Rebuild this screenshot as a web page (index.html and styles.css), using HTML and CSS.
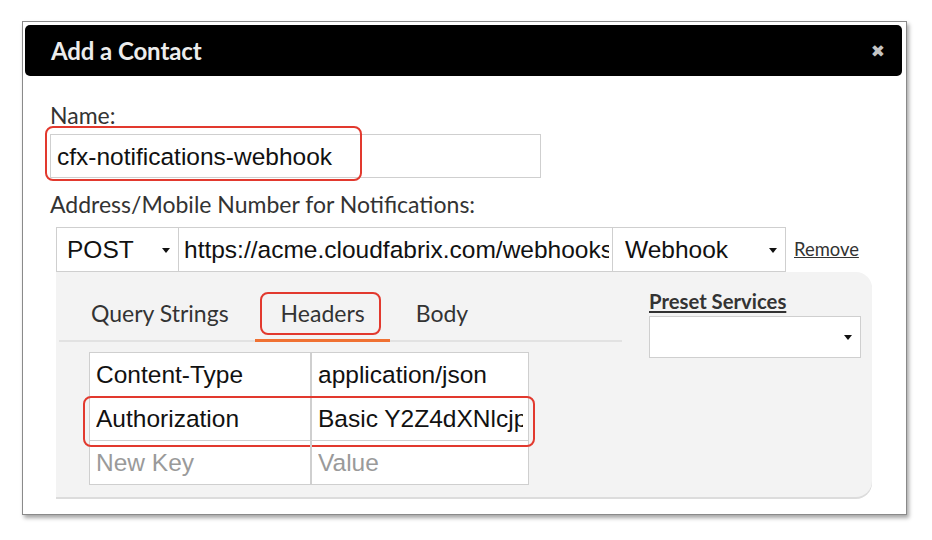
FILE: index.html
```html
<!DOCTYPE html>
<html>
<head>
<meta charset="utf-8">
<link rel="stylesheet" href="styles.css">
</head>
<body>
<div class="dialog">
  <div class="titlebar">
    <span class="title">Add a Contact</span>
    <span class="close">&#x2716;</span>
  </div>
  <div class="content">
    <div class="label name-label">Name:</div>
    <div class="name-wrap">
      <div class="input name-input">cfx-notifications-webhook</div>
      <span class="hl hl-name"></span>
    </div>
    <div class="label addr-label">Address/Mobile Number for Notifications:</div>
    <div class="addr-row">
      <div class="input select method">POST<span class="caret"></span></div>
      <div class="input url"><span class="clip">https://acme.cloudfabrix.com/webhooks</span></div>
      <div class="input select type">Webhook<span class="caret"></span></div>
      <a class="remove">Remove</a>
    </div>
    <div class="panel">
      <div class="panel-main">
        <div class="tabs">
          <div class="tab">Query Strings</div>
          <div class="tab active">Headers<span class="hl hl-tab"></span></div>
          <div class="tab">Body</div>
        </div>
        <div class="kv">
          <div class="kv-row">
            <div class="cell"><span class="clip">Content-Type</span></div>
            <div class="cell"><span class="clip">application/json</span></div>
          </div>
          <div class="kv-row">
            <div class="cell"><span class="clip">Authorization</span></div>
            <div class="cell"><span class="clip">Basic Y2Z4dXNlcjpwYXNz</span></div>
            <span class="hl hl-auth"></span>
          </div>
          <div class="kv-row">
            <div class="cell placeholder"><span class="clip">New Key</span></div>
            <div class="cell placeholder"><span class="clip">Value</span></div>
          </div>
        </div>
      </div>
      <div class="panel-side">
        <a class="preset-label">Preset Services</a>
        <div class="input select preset"><span class="caret"></span></div>
      </div>
    </div>
  </div>
</div>
</body>
</html>
```

FILE: styles.css
```css
* { box-sizing: border-box; }
html, body { margin: 0; padding: 0; background: #fff; }
body { width: 932px; height: 540px; overflow: hidden; }

.dialog {
  margin: 21px 0 0 22px;
  width: 885px;
  height: 494px;
  border: 1px solid #8a8a8a;
  background: #fff;
  padding: 3px 4px 0 2px;
  box-shadow: 2px 3px 4px rgba(0,0,0,0.35);
}

.titlebar {
  height: 51px;
  background: #000;
  border-radius: 5px;
  display: flex;
  align-items: center;
  justify-content: space-between;
  padding: 0 17px 0 26px;
}
.title {
  font-family: "Lato", sans-serif;
  font-weight: 700;
  font-size: 24px;
  color: #ececec;
  letter-spacing: -0.1px;
}
.close {
  font-family: "DejaVu Sans", sans-serif;
  font-size: 17px;
  color: #c4c4c4;
  font-weight: bold;
}

.content { padding-left: 25px; }

.label {
  font-family: "Lato", sans-serif;
  font-size: 23px;
  color: #333;
  line-height: 26px;
}
.name-label { margin-top: 26px; height: 32px; }
.addr-label { margin-top: 13px; margin-bottom: 10px; height: 26px; }

.input {
  font-family: "Liberation Sans", Arial, sans-serif;
  font-size: 24.5px;
  color: #111;
  background: #fff;
  border: 1px solid #cfcfcf;
  white-space: nowrap;
  overflow: hidden;
  display: flex;
  align-items: center;
}
.clip { display: block; flex: 1; min-width: 0; overflow: hidden; white-space: nowrap; }

.name-wrap { position: relative; width: 491px; height: 44px; }
.name-input { width: 491px; height: 44px; padding: 2px 0 0 6px; }

.hl {
  position: absolute;
  border: 2px solid #e2392e;
  border-radius: 8px;
  pointer-events: none;
}
.hl-name { left: -5px; top: -8px; width: 317px; height: 55px; }

.addr-row { display: flex; align-items: center; margin-left: 6px; height: 45px; }
.select { position: relative; }
.method { width: 123px; height: 45px; padding-left: 10px; }
.url { width: 434px; height: 45px; padding: 0 3px 0 5px; border-left: none; }
.type { width: 173px; height: 45px; padding-left: 12px; border-left: none; }
.caret {
  position: absolute;
  right: 8px;
  top: 50%;
  margin-top: -2px;
  width: 0; height: 0;
  border-left: 4px solid transparent;
  border-right: 4px solid transparent;
  border-top: 5px solid #111;
}
.remove {
  margin-left: 8px;
  font-family: "Lato", sans-serif;
  font-size: 18.4px;
  color: #333;
  text-decoration: underline;
  margin-top: -2px;
}

.panel {
  margin-left: 6px;
  width: 816px;
  height: 225px;
  background: #f3f3f3;
  border-radius: 0 16px 16px 0;
  box-shadow: 0 2px 0 #dcdcdc;
  display: flex;
}
.panel-main { width: 566px; padding-left: 3px; }

.tabs {
  margin-top: 16px;
  display: flex;
  padding-left: 6px;
  border-bottom: 2px solid #e2e2e2;
  height: 54px;
}
.tab {
  position: relative;
  font-family: "Lato", sans-serif;
  font-size: 23px;
  color: #333;
  line-height: 30px;
  padding: 10px 26px 12px;
  height: 54px;
}
.tab.active { border-bottom: 3px solid #f07132; padding-right: 25px; }
.hl-tab { left: 5px; top: 4px; width: 121px; height: 43px; }

.kv {
  margin: 10px 0 0 30px;
  width: 440px;
  border: 1px solid #cfcfcf;
  background: #fff;
}
.kv-row { position: relative; display: flex; height: 44px; border-bottom: 1px solid #cfcfcf; }
.kv-row:last-child { border-bottom: none; height: 43px; }
.cell {
  width: 220px;
  font-family: "Liberation Sans", Arial, sans-serif;
  font-size: 24.5px;
  color: #111;
  padding: 0 5px 0 6px;
  display: flex;
  align-items: center;
  white-space: nowrap;
  overflow: hidden;
}
.cell + .cell { border-left: 2px solid #cfcfcf; width: 218px; }
.placeholder { color: #9a9a9a; }
.hl-auth { left: -7px; top: -1px; width: 452px; height: 51px; }

.panel-side { margin-left: 27px; padding-top: 16px; }
.preset-label {
  display: block;
  font-family: "Lato", sans-serif;
  font-weight: 700;
  font-size: 20.3px;
  color: #333;
  text-decoration: underline;
  line-height: 26px;
}
.preset { margin-top: 2px; width: 212px; height: 42px; }
```
